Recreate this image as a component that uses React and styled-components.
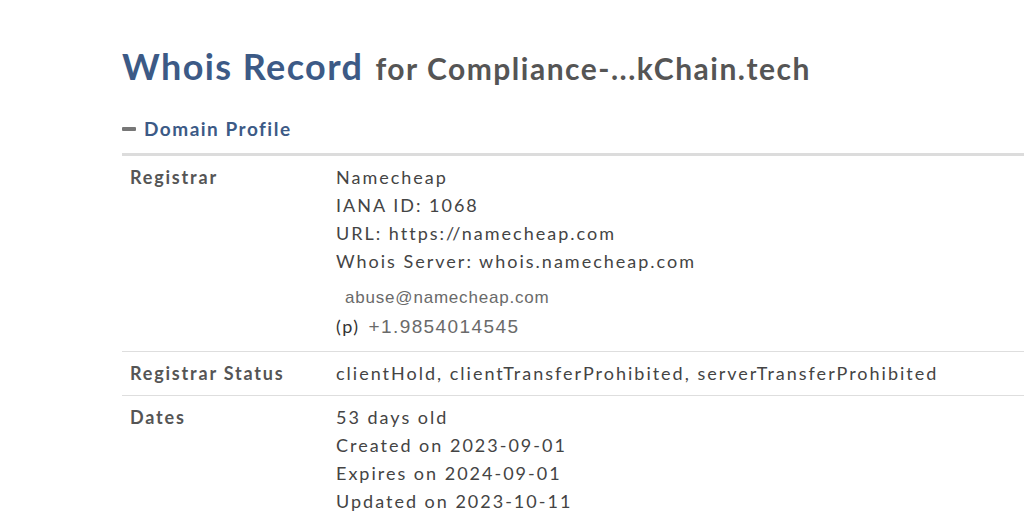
import React from 'react'
import styled, { createGlobalStyle } from 'styled-components'

const GlobalStyle = createGlobalStyle`
  html, body {
    margin: 0;
    padding: 0;
    background: #fff;
    overflow: hidden;
  }
  body {
    font-family: Lato, "Open Sans", sans-serif;
  }
`

const Page = styled.div`
  padding: 44px 0 0 122px;
`

const Title = styled.h1`
  margin: 0;
  font-size: 36px;
  font-weight: 700;
  line-height: 44px;
  letter-spacing: 1.4px;
  color: #3c5a86;
  white-space: nowrap;
`

const Domain = styled.span`
  font-size: 30px;
  color: #555;
  letter-spacing: 1.5px;
  margin-left: 2px;
`

const SectionHead = styled.div`
  display: flex;
  align-items: center;
  gap: 8px;
  margin-top: 27px;
  padding-bottom: 12px;
  border-bottom: 3px solid #dcdcdc;
  color: #3c5a86;
  font-size: 19px;
  font-weight: 700;
  letter-spacing: 1.5px;
  line-height: 24px;
`

const Minus = styled.span`
  display: inline-block;
  width: 14px;
  height: 4px;
  border-radius: 1px;
  background: #777;
`

const Row = styled.div`
  display: grid;
  grid-template-columns: 214px 1fr;
  padding: 7px 0 ${p => (p.$tight ? '8px' : '10px')};
  border-bottom: ${p => (p.$last ? 'none' : '1px solid #dedede')};
`

const Label = styled.div`
  padding-left: 8px;
  font-size: 18px;
  font-weight: 700;
  color: #555;
  letter-spacing: 1.8px;
  line-height: 28px;
`

const Values = styled.div`
  display: flex;
  flex-direction: column;
`

const Line = styled.div`
  font-size: 18px;
  color: #444;
  letter-spacing: 2px;
  line-height: 28px;
  white-space: nowrap;
`

const Email = styled.div`
  margin-top: 9px;
  padding-left: 9px;
  font-family: "Liberation Sans", Arial, sans-serif;
  font-size: 17px;
  letter-spacing: 0.8px;
  color: #6a6a6a;
  line-height: 28px;
`

const Phone = styled.div`
  display: flex;
  align-items: baseline;
  gap: 9px;
  font-size: 18px;
  letter-spacing: 1.5px;
  color: #333;
  line-height: 28px;
`

const PhoneNum = styled.span`
  font-family: "Liberation Sans", Arial, sans-serif;
  font-size: 19px;
  letter-spacing: 1.4px;
  color: #6a6a6a;
`

export default function App () {
  return (
    <>
      <GlobalStyle />
      <Page>
        <Title>
          Whois Record <Domain>for Compliance-...kChain.tech</Domain>
        </Title>
        <SectionHead>
          <Minus />
          Domain Profile
        </SectionHead>
        <Row>
          <Label>Registrar</Label>
          <Values>
            <Line>Namecheap</Line>
            <Line>IANA ID: 1068</Line>
            <Line>URL: https://namecheap.com</Line>
            <Line>Whois Server: whois.namecheap.com</Line>
            <Email>abuse@namecheap.com</Email>
            <Phone>
              (p) <PhoneNum>+1.9854014545</PhoneNum>
            </Phone>
          </Values>
        </Row>
        <Row $tight>
          <Label>Registrar Status</Label>
          <Values>
            <Line>clientHold, clientTransferProhibited, serverTransferProhibited</Line>
          </Values>
        </Row>
        <Row $last>
          <Label>Dates</Label>
          <Values>
            <Line>53 days old</Line>
            <Line>Created on 2023-09-01</Line>
            <Line>Expires on 2024-09-01</Line>
            <Line>Updated on 2023-10-11</Line>
          </Values>
        </Row>
      </Page>
    </>
  )
}
